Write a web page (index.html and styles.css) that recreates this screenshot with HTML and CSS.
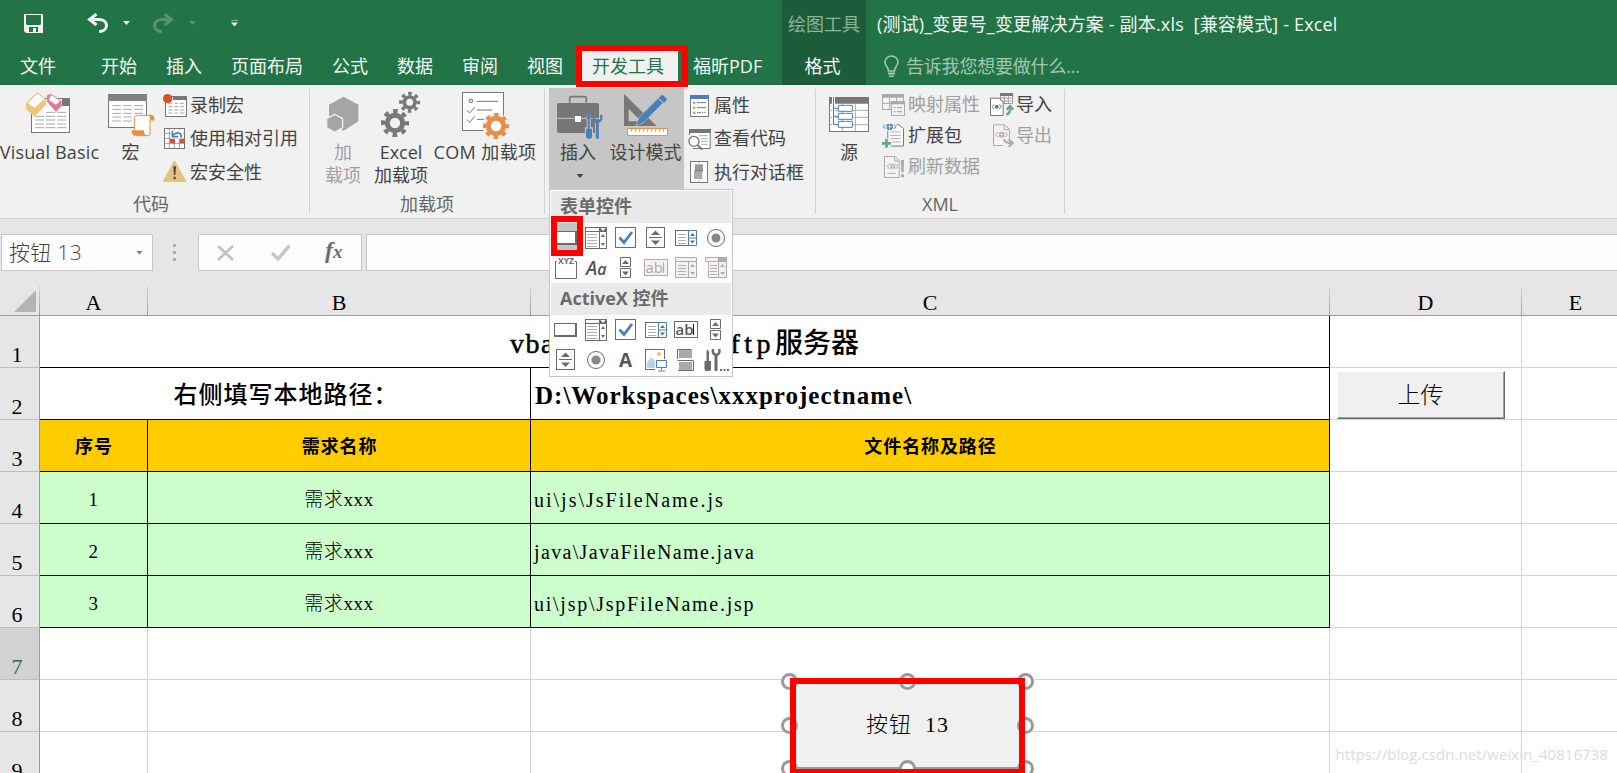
FILE: index.html
```html
<!DOCTYPE html>
<html lang="zh-CN">
  <head>
    <meta charset="UTF-8" />
    <meta name="viewport" content="width=device-width, initial-scale=1.0" />
    <title>(测试)_变更号_变更解决方案 - 副本.xls [兼容模式] - Excel</title>
    <link rel="stylesheet" href="styles.css">
  </head>
  <body>
    <!-- shared icons -->
    <svg class="defs" width="0" height="0">
      <symbol id="i-combo" viewBox="0 0 30 30">
        <rect x="4.5" y="4.5" width="21" height="21" class="paper" />
        <path d="M4.5 8.5h14M18.5 4.5v21" class="line" />
        <path d="M18 4h8v5h-8z" class="solid" />
        <path d="M19.5 5l2.500 3 2.500-3z" fill="#fff" />
        <path d="M6 11.500h10M6 14.500h10M6 17.500h10M6 20.500h10M6 23.500h10" class="thin" />
        <path d="M20 14l2-3 2 3zM20 20l2 3 2-3z" class="solid" />
      </symbol>
      <symbol id="i-check" viewBox="0 0 30 30">
        <rect x="4.500" y="4.500" width="20" height="20" class="paper" />
        <path d="M8.500 14.500l4.500 5 8-10.500" fill="none" stroke="#4a80b8" stroke-width="2.800" />
      </symbol>
      <symbol id="i-spin" viewBox="0 0 30 30">
        <rect x="5.500" y="4.500" width="18" height="20" class="paper" />
        <path d="M8 14.500h13" class="line" />
        <path d="M10 12l4.500-4.500 4.500 4.500zM10 17.500l4.500 4.500 4.500-4.500z" class="solid" />
      </symbol>
      <symbol id="i-list" viewBox="0 0 30 30">
        <rect x="4.500" y="7.500" width="13" height="15" class="paper" />
        <path d="M7 11.500h8M7 14.500h8M7 17.500h8M7 20.500h8" class="thin" />
        <path d="M17.500 7.500h8v15h-8zM17.500 15h8" fill="#fff" stroke="#4a80b8" />
        <path d="M19 13l2.500-3 2.500 3zM19 17.500l2.500 3 2.500-3z" class="solid" />
      </symbol>
      <symbol id="i-radio" viewBox="0 0 30 30">
        <circle cx="15" cy="15" r="8.500" class="paper" />
        <circle cx="15" cy="15" r="4.500" fill="#888" />
      </symbol>
      <symbol id="i-scroll" viewBox="0 0 30 30">
        <path d="M9.500 4.500h10v9h-10zM9.500 15.500h10v9h-10z" class="paper" />
        <path d="M11 11l3.500-4 3.500 4zM11 18.500l3.500 4 3.500-4z" class="solid" />
      </symbol>
      <symbol id="i-button" viewBox="0 0 30 30">
        <path d="M3 8h23v14H3z" class="solid" />
        <path d="M4 9h20v11H4z" fill="#fff" />
      </symbol>
    </svg>

    <header class="titlebar">
      <div class="top-left">
        <div class="quick">
          <svg class="q-save" width="19" height="19" viewBox="0 0 19 19">
            <path d="M0 0h19v19H2l-2-2z" fill="#f0f0f0" />
            <path d="M2 1h15v9l-1 1H3l-1-1zM5 13h9v5h-2v-4H9v4H5z" fill="#227447" />
          </svg>
          <svg class="q-undo" width="22" height="20" viewBox="0 0 22 20">
            <path d="M9.500 1L2.500 6.500l7 5.500M3 6.500h9c10 0 10 12 0 12" fill="none" stroke="#f0f0f0" stroke-width="3" />
          </svg>
          <i class="caret q-c1"></i>
          <svg class="q-redo" width="22" height="20" viewBox="0 0 22 20">
            <path d="M12.500 1l7 5.500-7 5.500M19 6.500h-9c-10 0-10 12 0 12" fill="none" stroke="#56946f" stroke-width="3" />
          </svg>
          <i class="caret q-c2"></i>
          <i class="caret q-c3"></i>
        </div>
        <nav class="tabs">
          <a class="file">文件</a>
          <a>开始</a>
          <a>插入</a>
          <a>页面布局</a>
          <a>公式</a>
          <a>数据</a>
          <a>审阅</a>
          <a>视图</a>
          <a class="active">开发工具</a>
          <a class="pdf">福昕PDF</a>
        </nav>
      </div>
      <div class="context">
        <span class="context-name">绘图工具</span>
        <span class="context-tab">格式</span>
      </div>
      <div class="top-right">
        <span class="doc-title">(测试)_变更号_变更解决方案 - 副本.xls&nbsp; [兼容模式] - Excel</span>
        <span class="tell">
          <svg width="15" height="23" viewBox="0 0 15 23">
            <path d="M4.500 16c0-4-3.500-5-3.500-9a6.500 6 0 0 1 13 0c0 4-3.500 5-3.500 9z" fill="none" stroke="#a3c7b1" stroke-width="1.600" />
            <path d="M4 17.500h7v2H4zM5 20.500h5v1.500H5z" fill="#a3c7b1" />
          </svg>
          <span>告诉我您想要做什么...</span>
        </span>
      </div>
      <div class="mark mark-tab"></div>
    </header>

    <section class="ribbon">
      <div class="group g-code">
        <div class="items">
          <div class="big b-vb">
            <svg width="50" height="53" viewBox="72 15 150 159">
              <rect x="94.500" y="43.500" width="114" height="102" fill="#fff" stroke="#777" stroke-width="3" />
              <path d="M186 42h24v24h-24z" fill="#777" />
              <path d="M105 97h28m5 0h28m6 0h27M105 108h28m5 0h28m6 0h27M105 120h28m5 0h28m6 0h27M105 131h28m5 0h28m6 0h27M138 85h28m6 0h27" stroke="#aaa" stroke-width="3" />
              <path d="M112 24l26 21v18l-35 35-25-23V57z" fill="#edc67c" />
              <path d="M112 29l21 15-29 27-21-13z" fill="#fff" />
              <path d="M141 34l12-5 32 22v15l-17 18-27-31z" fill="#e3799a" />
              <path d="M154 33l26 18-12 11-22-15z" fill="#fff" />
            </svg>
            <span>Visual Basic</span>
          </div>
          <div class="big b-macro">
            <svg width="51" height="53" viewBox="315 15 153 159">
              <rect x="325.500" y="31.500" width="114" height="99" fill="#fff" stroke="#777" stroke-width="3" />
              <path d="M324 30h117v21H324z" fill="#808080" />
              <path d="M337 65h26m7 0h25m8 0h26M337 76h26m7 0h25m8 0h26M337 88h26m7 0h25m8 0h26M337 99h26m7 0h25M337 111h26m7 0h25" stroke="#aaa" stroke-width="3" />
              <path d="M404 140v-38q0-8 8-8h42q8 0 8 14h-12v42q0 5-8 5h-30z" fill="#fff" stroke="#e68f45" stroke-width="3" />
              <path d="M448 94h8q6 0 6 15h-12zM396 139h35q0 12 9 16h-36q-12-4-8-16z" fill="#e68f45" />
            </svg>
            <span>宏</span>
          </div>
          <div class="smalls">
            <div class="small">
              <svg width="24" height="24" viewBox="489 27 72 72">
                <rect x="496.500" y="34.500" width="63" height="60" fill="#fff" stroke="#777" stroke-width="3" />
                <path d="M519 33h42v12h-42z" fill="#777" />
                <path d="M505 55h12m6 0h12m5 0h12M505 65h12m6 0h12m5 0h12M505 75h12m6 0h12m5 0h12M505 84h12m6 0h12m5 0h12" stroke="#aaa" stroke-width="3" />
                <circle cx="503" cy="41" r="14" fill="#d3542d" />
              </svg>
              <span>录制宏</span>
            </div>
            <div class="small">
              <svg width="24" height="24" viewBox="489 126 72 72">
                <rect x="493.500" y="130.500" width="60" height="60" fill="#fff" stroke="#777" stroke-width="3" />
                <path d="M508 131v59M523 131v59M538 131v59M494 145h60M494 160h60M494 175h60" stroke="#777" stroke-width="2" />
                <path d="M510 162h15v13h-15zM539 162h15v13h-15z" fill="#d3542d" />
                <path d="M512 136h36v25h-36z" fill="#fff" />
                <path d="M544 158q0-24-26-8M517 137v18h18" fill="none" stroke="#4a80b8" stroke-width="5" />
              </svg>
              <span>使用相对引用</span>
            </div>
            <div class="small">
              <svg width="24" height="24" viewBox="489 225 72 72">
                <path d="M523 228q3 0 5 4l30 55q1 4-3 4h-63q-4 0-3-4l30-55q1-4 4-4z" fill="#e9c17f" />
                <path d="M520 244h8l-2 26h-4zM521 275h6v8h-6z" fill="#444" />
              </svg>
              <span>宏安全性</span>
            </div>
          </div>
        </div>
        <div class="label">代码</div>
      </div>

      <div class="group g-addin">
        <div class="items">
          <div class="big b-add off">
            <svg width="50" height="53" viewBox="39 15 150 159">
              <path d="M116 38l44 24v50l-44 28-44-28V62z" fill="#a6a4a6" />
              <path d="M89 91l24 13v27l-24 14-24-14v-27z" fill="#a6a4a6" stroke="#f1f1f1" stroke-width="4" />
            </svg>
            <span>加</span><span>载项</span>
          </div>
          <div class="big b-excel">
            <svg width="50" height="53" viewBox="213 15 150 159" fill="none" stroke="#787878">
              <circle cx="270" cy="117" r="23" stroke-width="15" />
              <circle cx="270" cy="117" r="36" stroke-width="12" stroke-dasharray="14.140" stroke-dashoffset="7" />
              <circle cx="314" cy="55" r="16" stroke-width="11" />
              <circle cx="314" cy="55" r="26" stroke-width="11" stroke-dasharray="10.210" stroke-dashoffset="5" />
            </svg>
            <span>Excel</span><span>加载项</span>
          </div>
          <div class="big b-com">
            <svg width="50" height="53" viewBox="465 15 150 159" fill="none">
              <rect x="472.500" y="25.500" width="123" height="114" fill="#fff" stroke="#777" stroke-width="3" />
              <path d="M493 46h9v9h-9zM516 52h63M516 78h45M516 106h22M486 79l8 8 15-18M486 107l8 8 15-18" stroke="#777" stroke-width="3" />
              <circle cx="573" cy="126" r="34" fill="#f1f1f1" stroke="#f1f1f1" stroke-width="12" />
              <circle cx="573" cy="126" r="23" stroke="#e68f45" stroke-width="15" fill="#fff" />
              <circle cx="573" cy="126" r="33" stroke="#e68f45" stroke-width="12" stroke-dasharray="12.960" stroke-dashoffset="6.500" />
            </svg>
            <span>COM 加载项</span>
          </div>
        </div>
        <div class="label">加载项</div>
      </div>

      <div class="group g-ctl">
        <div class="items">
          <div class="pressed">
            <div class="big b-insert">
              <svg width="50" height="53" viewBox="24 15 150 159">
                <path d="M74 56V44q0-6 6-6h38q6 0 6 6v12" fill="none" stroke="#777" stroke-width="5" />
                <rect x="36" y="57" width="126" height="90" rx="6" fill="#777" />
                <path d="M36 103h126" stroke="#c6c6c6" stroke-width="3" />
                <path d="M90 96h18v18H90z" fill="#fff" />
                <path d="M131 92v45" stroke="#c6c6c6" stroke-width="12" />
                <path d="M120 130h24v40h-24zM150 112h14v54h-14z" fill="#c6c6c6" />
                <path d="M131 92v45" stroke="#4a80b8" stroke-width="6" />
                <path d="M123 134h18v24q0 6-6 6h-6q-6 0-6-6zM126 92h11v12h-11z" fill="#4a80b8" />
                <path d="M157 112v52" stroke="#4a80b8" stroke-width="9" />
                <path d="M147 92q-4 20 10 22 16-2 11-22" fill="none" stroke="#4a80b8" stroke-width="7" />
              </svg>
              <span>插入</span>
              <i class="caret dark"></i>
            </div>
            <div class="big b-design">
              <svg width="51" height="53" viewBox="225 15 153 159">
                <path d="M237 30l98 96h-98zM251 74v38h37z" fill="#777" fill-rule="evenodd" />
                <path d="M282 100l57-57 15 14-57 58-24 11z" fill="#4a80b8" stroke="#c6c6c6" stroke-width="2" />
                <path d="M341 42l8-8q4-2 7 1l8 8q2 3-1 7l-6 7z" fill="#4a80b8" />
                <path d="M247.500 133.500h120v21h-120z" fill="#fff" stroke="#e68f45" stroke-width="3" />
                <path d="M260 135v8M272 135v8M284 135v8M296 135v8M308 135v8M320 135v8M332 135v8M344 135v8M356 135v8" stroke="#e68f45" stroke-width="3" />
              </svg>
              <span>设计模式</span>
            </div>
          </div>
          <div class="smalls">
            <div class="small">
              <svg width="24" height="24" viewBox="429 27 72 72">
                <rect x="436.500" y="31.500" width="54" height="63" fill="#fff" stroke="#777" stroke-width="3" />
                <path d="M435 30h57v12h-57z" fill="#4a80b8" />
                <path d="M456 53h27M456 68h27M456 83h12m3 0h4m3 0h4" stroke="#777" stroke-width="3" />
                <path d="M445 51h5v5h-5zM445 66h5v5h-5zM445 81h5v5h-5z" fill="none" stroke="#777" stroke-width="2" />
              </svg>
              <span>属性</span>
            </div>
            <div class="small">
              <svg width="24" height="24" viewBox="427 126 72 72">
                <rect x="431.500" y="133.500" width="62" height="57" fill="#fff" stroke="#777" stroke-width="3" />
                <path d="M430 132h65v12h-65z" fill="#777" />
                <path d="M461 152h25M466 161h20M466 169h20M466 178h20" stroke="#aaa" stroke-width="3" />
                <path d="M427 150h14v45h-14z" fill="#f1f1f1" />
                <circle cx="445" cy="169" r="15" fill="#fff" stroke="#777" stroke-width="4" />
                <path d="M456 180l13 14" stroke="#777" stroke-width="6" />
              </svg>
              <span>查看代码</span>
            </div>
            <div class="small">
              <svg width="24" height="24" viewBox="429 225 72 72">
                <rect x="436.500" y="229.500" width="51" height="63" fill="#fff" stroke="#777" stroke-width="3" />
                <path d="M450 238h24v18h-24z" fill="#999" />
                <path d="M447 256h25v26h-25z" fill="#aaa" />
                <path d="M450 257h24" stroke="#777" stroke-width="3" />
                <path d="M461 232h3v3h-3zM461 286h3v3h-3z" fill="#777" />
              </svg>
              <span>执行对话框</span>
            </div>
          </div>
        </div>
      </div>

      <div class="group g-xml">
        <div class="items">
          <div class="big b-source">
            <svg width="50" height="53" viewBox="42 15 150 159">
              <rect x="58.500" y="40.500" width="117" height="102" fill="#fff" stroke="#777" stroke-width="3" />
              <path d="M57 39h120v20H57z" fill="#777" />
              <path d="M58 79h118M58 100h118M58 122h118M97 60v82M136 60v82" stroke="#aaa" stroke-width="3" />
              <path d="M66 36h9v88h-9z" fill="#fff" />
              <path d="M70.500 39v83h14M70 73h14M70 97h14" fill="none" stroke="#4a80b8" stroke-width="3" />
              <path d="M85 64h42v18H85zM85 88h42v18H85zM85 112h42v18H85z" fill="#fff" stroke="#4a80b8" stroke-width="3" />
            </svg>
            <span>源</span>
          </div>
          <div class="smalls tight c2">
            <div class="small off">
              <svg width="24" height="24" viewBox="216 25 72 72">
                <rect x="217.500" y="29.500" width="63" height="45" fill="#f6f2f6" stroke="#aaa" stroke-width="3" />
                <path d="M216 28h66v11h-66z" fill="#aaa" />
                <path d="M239 39v36M260 39v12M217 56h26" stroke="#aaa" stroke-width="3" />
                <path d="M244.500 50.500h39v42h-39z" fill="#f6f2f6" stroke="#aaa" stroke-width="3" />
                <path d="M243 49h42v10h-42zM251 67h6v4h-6zM261 67h15v4h-15zM251 79h6v4h-6zM261 79h15v4h-15z" fill="#aaa" />
              </svg>
              <span>映射属性</span>
            </div>
            <div class="small">
              <svg width="24" height="24" viewBox="213 116 72 72">
                <path d="M230.500 130v52h47v-52l-14-12h-14" fill="#fff" stroke="#777" stroke-width="3" />
                <path d="M237 140h32M237 150h32M237 160h32M243 170h26" stroke="#aaa" stroke-width="3" />
                <path d="M213 116h44v20h-44zM213 158h27v30h-27z" fill="#f1f1f1" />
                <circle cx="236" cy="124" r="10" fill="#4a80b8" />
                <path d="M227 124h18M236 115v18" stroke="#fff" stroke-width="2" />
                <path d="M222 118l-5 6 5 6M250 118l5 6-5 6" fill="none" stroke="#777" stroke-width="3" />
                <path d="M213 174h27M226.500 160v27" stroke="#66a58e" stroke-width="8" />
              </svg>
              <span>扩展包</span>
            </div>
            <div class="small off">
              <svg width="24" height="24" viewBox="216 207 72 72">
                <path d="M223.500 211.500h32l12 12v51h-44z" fill="#f6f2f6" stroke="#aaa" stroke-width="3" />
                <path d="M254 212v13h13M240 232l-9 9 9 9M256 232l8 9-8 9M232 262h25" fill="none" stroke="#aaa" stroke-width="3" />
                <circle cx="248" cy="241" r="8" fill="#aaa" />
                <path d="M240 241h16M248 233v16" stroke="#f6f2f6" stroke-width="2" />
                <path d="M270 218h16v60h-16z" fill="#f1f1f1" />
                <path d="M273 222h9l-1 37h-7zM273 265h9v9h-9z" fill="#aaa" />
              </svg>
              <span>刷新数据</span>
            </div>
          </div>
          <div class="smalls tight">
            <div class="small">
              <svg width="24" height="24" viewBox="540 25 72 72">
                <path d="M571.500 26.500h36v30h-36zM571 40h37M571 49h37M583 34v24M595 34v24" fill="#fff" stroke="#777" stroke-width="2" />
                <path d="M570 25h39v9h-39z" fill="#777" />
                <path d="M541.500 40.500h26l12 12v40h-38z" fill="#fff" stroke="#777" stroke-width="3" />
                <circle cx="560" cy="66" r="6" fill="#4a80b8" />
                <path d="M552 59l-6 7 6 7M568 59l6 7-6 7" fill="none" stroke="#777" stroke-width="3" />
                <path d="M584 58h28v39h-28z" fill="#f1f1f1" />
                <path d="M589 90q14-6 11-22M590 75l10-11 10 11" fill="none" stroke="#66a58e" stroke-width="7" />
              </svg>
              <span>导入</span>
            </div>
            <div class="small off">
              <svg width="24" height="24" viewBox="540 116 72 72">
                <path d="M550.500 118.500h33l15 14v48h-48z" fill="#f6f2f6" stroke="#aaa" stroke-width="3" />
                <path d="M582 119v14h16M564 140l-7 8 7 8M586 140l7 8-7 8" fill="none" stroke="#aaa" stroke-width="3" />
                <circle cx="575" cy="148" r="9" fill="#aaa" />
                <path d="M566 148h18M575 139v18" stroke="#f6f2f6" stroke-width="2" />
                <path d="M579 160h33v27h-33z" fill="#f1f1f1" />
                <path d="M582 162q3 12 22 11M596 162l12 11-12 11" fill="none" stroke="#aaa" stroke-width="6" />
              </svg>
              <span>导出</span>
            </div>
          </div>
        </div>
        <div class="label">XML</div>
      </div>

      <!-- insert control menu -->
      <div class="menu">
        <div class="menu-head">表单控件</div>
        <div class="icons">
          <span class="hot"><svg><use href="#i-button" /></svg></span>
          <svg><use href="#i-combo" /></svg>
          <svg><use href="#i-check" /></svg>
          <svg><use href="#i-spin" /></svg>
          <svg><use href="#i-list" /></svg>
          <svg><use href="#i-radio" /></svg>
          <svg viewBox="0 0 30 30">
            <path d="M6 8.500H4.500v17h21v-17H24" class="line" />
            <text x="7" y="11" class="xyz">XYZ</text>
          </svg>
          <svg viewBox="0 0 30 30"><text x="5" y="22" class="aa">A<tspan font-size="16">a</tspan></text></svg>
          <svg><use href="#i-scroll" /></svg>
          <svg class="dim" viewBox="0 0 30 30">
            <rect x="3.500" y="6.500" width="23" height="16" class="paper" />
            <text x="4.500" y="20" class="abl">ab</text>
            <path d="M22.500 9v11" class="line" />
          </svg>
          <svg class="dim" viewBox="0 0 30 30">
            <path d="M4.500 4.500h21v4h-21zM4.500 8.500h13v16h-13zM17.500 8.500h8v16h-8z" class="paper" />
            <path d="M7 12.500h8M7 15.500h8M7 18.500h8M7 21.500h8" class="thin" />
            <path d="M19 14l2.500-3 2.500 3zM19 19l2.500 3 2.500-3z" class="solid" />
          </svg>
          <svg class="dim" viewBox="0 0 30 30">
            <path d="M4.500 4.500h21v4h-21zM7.500 8.500h10v16h-10zM17.500 8.500h8v16h-8z" class="paper" />
            <path d="M9 12.500h7M9 15.500h7M9 18.500h7M9 21.500h7" class="thin" />
            <path d="M17 4h9v4h-9zM19 14l2.500-3 2.500 3zM19 19l2.500 3 2.500-3z" class="solid" />
          </svg>
        </div>
        <div class="menu-head">ActiveX 控件</div>
        <div class="icons">
          <svg><use href="#i-button" /></svg>
          <svg><use href="#i-combo" /></svg>
          <svg><use href="#i-check" /></svg>
          <svg><use href="#i-list" /></svg>
          <svg viewBox="0 0 30 30">
            <rect x="3.500" y="6.500" width="23" height="16" class="paper" />
            <text x="4.500" y="20" class="abl dark">ab</text>
            <path d="M22.500 9v11" stroke="#222" />
          </svg>
          <svg><use href="#i-scroll" /></svg>
          <svg><use href="#i-spin" /></svg>
          <svg><use href="#i-radio" /></svg>
          <svg viewBox="0 0 30 30"><text x="8" y="22" class="big-a">A</text></svg>
          <svg viewBox="0 0 30 30">
            <rect x="4.500" y="4.500" width="19" height="20" class="paper" />
            <circle cx="18" cy="9" r="2" fill="#e9c17f" />
            <path d="M6 23v-6l4.500-4.500 4.500 4.500v6z" fill="#bccfe4" />
            <path d="M14 14h13v12h-13z" fill="#fff" />
            <path d="M15.500 15.500h10v7h-10zM20.500 22.500v3M17 26h7" fill="#fff" stroke="#4a80b8" />
          </svg>
          <svg viewBox="0 0 30 30">
            <path d="M8 5h13v8H8zM8 17h13v8H8z" fill="#aaa" />
            <path d="M6.500 14V4.500h14M22 15.500H6.500M22.500 15.500v10H7" class="line" />
          </svg>
          <svg viewBox="0 0 30 30">
            <path d="M6.500 4l1.500 3v9h2v8q0 2-2 2H5.500q-2 0-2-2v-8h2V7zM13.500 9v17h3V9z" class="solid" />
            <path d="M12 4q-1 5 3 6 5-1 3-6" fill="none" stroke="#6b6b6b" stroke-width="2.500" />
            <path d="M19 24h2v2h-2zM22.500 24h2v2h-2zM26 24h2v2h-2z" class="solid" />
          </svg>
        </div>
        <div class="mark mark-control"></div>
      </div>
    </section>

    <section class="formula">
      <div class="name-box"><span>按钮 13</span> <i class="caret gray"></i></div>
      <div class="dots"><i></i><i></i><i></i></div>
      <div class="fx-box">
        <svg width="18" height="16" viewBox="0 0 18 16"><path d="M1 1l15 14M16 1L1 15" stroke="#c0c0c0" stroke-width="2.500" /></svg>
        <svg width="20" height="18" viewBox="0 0 20 18"><path d="M1 9l6 6L18.500 1.500" fill="none" stroke="#c8c8c8" stroke-width="3.500" /></svg>
        <span class="fx">f<small>x</small></span>
      </div>
      <div class="input-box"></div>
    </section>

    <main class="sheet">
      <table>
        <colgroup>
          <col class="w-row"><col class="w-a"><col class="w-b"><col class="w-c"><col class="w-d"><col class="w-e">
        </colgroup>
        <tr class="cols">
          <th class="corner"><svg width="22" height="22" viewBox="0 0 22 22"><path d="M22 0v22H0z" fill="#b4b4b4" /></svg></th>
          <th>A</th><th>B</th><th>C</th><th>D</th><th>E</th>
        </tr>
        <tr>
          <th>1</th>
          <td colspan="3" class="k title"><div><span class="t1">vba</span><span><span class="t2">ftp</span>服务器</span></div></td>
          <td></td><td></td>
        </tr>
        <tr>
          <th>2</th>
          <td colspan="2" class="k prompt">右侧填写本地路径：</td>
          <td class="k path">D:\Workspaces\xxxprojectname\</td>
          <td></td><td></td>
        </tr>
        <tr class="head">
          <th>3</th>
          <td class="k">序号</td><td class="k">需求名称</td><td class="k">文件名称及路径</td>
          <td></td><td></td>
        </tr>
        <tr class="data">
          <th>4</th>
          <td class="k">1</td><td class="k">需求xxx</td><td class="k file-name f1">ui\js\JsFileName.js</td>
          <td></td><td></td>
        </tr>
        <tr class="data">
          <th>5</th>
          <td class="k">2</td><td class="k">需求xxx</td><td class="k file-name f2">java\JavaFileName.java</td>
          <td></td><td></td>
        </tr>
        <tr class="data">
          <th>6</th>
          <td class="k">3</td><td class="k">需求xxx</td><td class="k file-name f3">ui\jsp\JspFileName.jsp</td>
          <td></td><td></td>
        </tr>
        <tr><th class="current">7</th><td></td><td></td><td></td><td></td><td></td></tr>
        <tr><th>8</th><td></td><td></td><td></td><td></td><td></td></tr>
        <tr><th>9</th><td></td><td></td><td></td><td></td><td></td></tr>
      </table>

      <button class="upload">上传</button>

      <div class="shape">
        <span>按钮&nbsp; 13</span>
        <i class="h tl"></i><i class="h tc"></i><i class="h tr"></i>
        <i class="h ml"></i><i class="h mr"></i>
        <i class="h bl"></i><i class="h bc"></i><i class="h br"></i>
        <div class="mark mark-shape"></div>
      </div>

      <div class="watermark">https://blog.csdn.net/weixin_40816738</div>
    </main>
  </body>
</html>
```

FILE: styles.css
```css
* {
  box-sizing: border-box;
}
body {
  margin: 0;
  width: 1617px;
  height: 773px;
  overflow: hidden;
  display: flex;
  flex-direction: column;
  background: #e6e6e6;
  font-family: "Open Sans", "Noto Sans CJK SC", sans-serif;
  font-size: 18px;
  color: #444;
}
.defs {
  position: absolute;
}
svg {
  flex: none;
}

/* red outlines */
.mark {
  position: absolute;
  border: 6px solid #ff0000;
}
.mark-tab {
  left: 576px;
  top: 45px;
  width: 112px;
  height: 42px;
  z-index: 2;
}
.mark-control {
  left: 1px;
  top: 26px;
  width: 32px;
  height: 40px;
}
.mark-shape {
  left: 0;
  top: -3px;
  width: 235px;
  height: 97px;
}

/* carets */
.caret {
  width: 7px;
  height: 4px;
  background: #f0f0f0;
  clip-path: polygon(0 0, 100% 0, 50% 100%);
}
.caret.dark {
  background: #444;
  margin: 11px 0 0 4px;
}
.caret.gray {
  background: #777;
}

/* title bar */
.titlebar {
  position: relative;
  display: flex;
  height: 85px;
  flex: none;
  background: #227447;
  color: #f4f8f5;
  white-space: nowrap;
}
.top-left {
  width: 782px;
}
.quick {
  display: flex;
  align-items: center;
  height: 51px;
  padding: 0 0 5px 24px;
}
.q-undo {
  margin-left: 44px;
}
.q-c1 {
  margin-left: 14px;
}
.q-redo {
  margin-left: 22px;
}
.q-c2 {
  margin-left: 15px;
  background: #56946f;
}
.q-c3 {
  margin-left: 35px;
  height: 7px;
  clip-path: polygon(0 0, 100% 0, 100% 1px, 0 1px, 0 3px, 100% 3px, 50% 100%, 0 3px);
}
.tabs {
  display: flex;
  height: 34px;
  line-height: 30px;
  padding-left: 20px;
}
.tabs a {
  margin-right: 29px;
}
.tabs .file {
  margin-right: 45px;
}
.tabs .active {
  width: 96px;
  margin: 0 15px 0 -10px;
  padding-right: 4px;
  background: #f1f1f1;
  color: #227447;
  text-align: center;
}
.tabs .pdf {
  margin: 0;
}
.context {
  display: flex;
  flex-direction: column;
  width: 84px;
  text-align: center;
  background: #1d5c3b;
  line-height: 30px;
}
.context-name {
  height: 51px;
  line-height: 48px;
  color: #8ab499;
}
.context-tab {
  padding-right: 3px;
}
.top-right {
  padding-left: 11px;
}
.doc-title {
  display: block;
  height: 51px;
  line-height: 48px;
  letter-spacing: 0.17px;
}
.tell {
  display: flex;
  align-items: center;
  gap: 7px;
  height: 31px;
  padding-left: 7px;
  color: #a3c7b1;
}
.tell span {
  margin-top: -4px;
  letter-spacing: -0.2px;
}

/* ribbon */
.ribbon {
  position: relative;
  display: flex;
  flex: none;
  height: 134px;
  background: #f1f1f1;
  border-bottom: 1px solid #d2d2d2;
  white-space: nowrap;
}
.group {
  display: flex;
  flex-direction: column;
  margin-top: 4px;
  height: 125px;
  border-right: 1px solid #d2d2d2;
}
.g-code {
  width: 310px;
}
.g-addin {
  width: 235px;
}
.g-ctl {
  width: 271px;
}
.g-xml {
  width: 249px;
}
.items {
  display: flex;
  flex: none;
  height: 104px;
}
.label {
  text-align: center;
  line-height: 22px;
  color: #666;
}
.g-code .label {
  padding-right: 7px;
}
.big {
  display: flex;
  flex-direction: column;
  align-items: center;
  line-height: 22px;
}
.big svg {
  height: 53px;
  margin-bottom: -1px;
}
.big span + span {
  margin-top: 1px;
}
.b-vb {
  width: 98px;
}
.b-vb span {
  padding-left: 1px;
  letter-spacing: 0.15px;
}
.b-macro {
  width: 65px;
}
.b-add {
  width: 66px;
}
.b-excel {
  width: 50px;
}
.b-com {
  width: 118px;
}
.b-com span {
  letter-spacing: 0.4px;
}
.b-insert {
  width: 58px;
}
.b-design {
  width: 77px;
}
.b-source {
  width: 66px;
}
.off {
  color: #a0a0a0;
}
.pressed {
  display: flex;
  height: 102px;
  margin: -1px 4px 0 4px;
  padding-top: 1px;
  background: #c6c6c6;
}
.small {
  display: flex;
  align-items: center;
  gap: 3px;
  height: 33.3px;
}
.small span {
  margin-top: -3px;
}
.g-ctl .small {
  gap: 2px;
}
.tight .small {
  height: 31px;
}
.tight .small span {
  margin: -4px 0 0 -1px;
}
.c2 {
  width: 108px;
}

/* menu */
.menu {
  position: absolute;
  left: 549px;
  top: 104px;
  width: 184px;
  height: 188px;
  padding: 1px;
  background: #fff;
  border: 1px solid #c6c6c6;
  z-index: 3;
}
.menu-head {
  height: 32px;
  line-height: 31px;
  padding-left: 9px;
  background: #eaeaea;
  color: #6b6b6b;
  font-weight: bold;
}
.icons {
  display: grid;
  grid-template-columns: repeat(6, 30px);
  grid-auto-rows: 30px;
  color: #6b6b6b;
}
.icons svg {
  display: block;
  width: 30px;
  height: 30px;
}
.hot {
  background: #c6c6c6;
}
.dim {
  color: #b0a9b0;
}
.paper {
  fill: #fff;
  stroke: currentColor;
}
.dim .paper {
  fill: #f6f0f6;
}
.line {
  fill: none;
  stroke: currentColor;
}
.thin {
  stroke: #b0b0b0;
}
.solid {
  fill: currentColor;
}
.abl {
  font-size: 15px;
  fill: currentColor;
}
.abl.dark {
  font-weight: 600;
  fill: #555;
}
.xyz {
  font-size: 8.5px;
  font-weight: bold;
  fill: currentColor;
}
.aa {
  font-size: 19px;
  font-style: italic;
  font-weight: 600;
  fill: #555;
}
.big-a {
  font-size: 19px;
  font-weight: bold;
  fill: #555;
}

/* formula bar */
.formula {
  display: flex;
  flex: none;
  height: 67px;
  padding: 15px 0 0 1px;
}
.formula > div {
  height: 37px;
}
.name-box,
.fx-box,
.input-box {
  background: #fdfdfd;
  border: 1px solid #c6c6c6;
}
.name-box {
  display: flex;
  align-items: center;
  justify-content: space-between;
  width: 152px;
  padding: 0 9px 0 7px;
  font-size: 21px;
}
.name-box span {
  margin-top: -3px;
  font-weight: 300;
  letter-spacing: 0.3px;
}
.dots {
  display: flex;
  flex-direction: column;
  justify-content: center;
  gap: 4px;
  width: 45px;
  padding-left: 20px;
}
.dots i {
  width: 3px;
  height: 3px;
  background: #b0b0b0;
}
.fx-box {
  display: flex;
  align-items: center;
  width: 164px;
  padding-left: 18px;
}
.fx-box svg + svg {
  margin-left: 36px;
}
.fx {
  margin: -4px 0 0 34px;
  font: italic bold 24px "Liberation Serif", serif;
  color: #6b6b6b;
}
.fx small {
  font-size: 19px;
}
.input-box {
  flex: 1;
  margin-left: 4px;
  border-right: 0;
}

/* sheet */
.sheet {
  position: relative;
  flex: 1;
  overflow: hidden;
  color: #000;
  font-family: "Liberation Serif", "Noto Sans CJK SC", serif;
}
table {
  table-layout: fixed;
  width: 1630px;
  border-spacing: 0;
  background: #fff;
}
.w-row {
  width: 40px;
}
.w-a {
  width: 108px;
}
.w-b {
  width: 383px;
}
.w-c {
  width: 799px;
}
.w-d {
  width: 192px;
}
.w-e {
  width: 108px;
}
td,
th {
  height: 52px;
  padding: 0;
  border: solid #d4d4d4;
  border-width: 0 1px 1px 0;
  text-align: center;
  white-space: nowrap;
  line-height: 24px;
}
th {
  padding: 0 5px 1px 0;
  background: #e6e6e6;
  border-right-color: #9b9b9b;
  border-bottom-color: #bdbdbd;
  font-size: 22px;
  font-weight: normal;
  line-height: 22px;
  vertical-align: bottom;
}
.cols th {
  height: 30px;
  padding: 0 0 1px;
  border-bottom-color: #9b9b9b;
  border-image: linear-gradient(#d8d8d8, #9b9b9b) 1;
  border-width: 0 1px 1px 0;
}
.cols .corner {
  padding: 0 3px 3px 0;
  text-align: right;
}
.corner svg {
  display: block;
  margin-left: auto;
}
th.current {
  background: #d2d2d2;
  color: #217346;
}
td.k {
  border-color: #000;
}
.title div {
  display: flex;
  justify-content: space-between;
  width: 349px;
  margin: 4px auto 0;
  font-size: 28px;
  font-weight: 500;
}
.t1 {
  letter-spacing: 1.5px;
}
.t2 {
  letter-spacing: 4.5px;
}
.t1,
.t2 {
  -webkit-text-stroke: 0.5px #000;
}
.prompt {
  padding: 2px 0 0 2px;
  font-size: 24px;
  letter-spacing: 1px;
  font-weight: 500;
}
td.path {
  padding: 4px 0 0 4px;
  text-align: left;
  font-size: 25px;
  font-weight: bold;
  letter-spacing: 1px;
}
.head .k {
  padding: 2px 0 0 1px;
  background: #ffcc00;
  font-size: 18px;
  font-weight: bold;
  letter-spacing: 0.9px;
}
.data .k {
  background: #ccffcc;
  font-size: 19px;
  font-weight: 300;
  letter-spacing: 0.6px;
  padding-top: 4px;
}
.data .file-name {
  padding-left: 3px;
  text-align: left;
  font-size: 20px;
}
.data .f1 {
  letter-spacing: 2px;
}
.data .f2 {
  letter-spacing: 1.35px;
}
.data .f3 {
  letter-spacing: 1.75px;
}
.upload {
  position: absolute;
  left: 1337px;
  top: 85px;
  width: 168px;
  height: 48px;
  padding: 0 1px 4px 0;
  background: #f0f0f0;
  border: 1px solid #fff;
  border-right-color: #696969;
  border-bottom-color: #696969;
  box-shadow: inset -1px -1px #a0a0a0;
  font: 300 23px "Noto Sans CJK SC", sans-serif;
  color: #000;
}
.shape {
  position: absolute;
  left: 790px;
  top: 395px;
  width: 235px;
  height: 88px;
  background: #f0f0f0;
  border-bottom: 2px solid #999;
  text-align: center;
  line-height: 88px;
  font-size: 22px;
  font-weight: 300;
  letter-spacing: 1px;
}
.h {
  position: absolute;
  width: 17px;
  height: 17px;
  border: 3px solid #999;
  border-radius: 50%;
  background: #fff;
}
.tl,
.ml,
.bl {
  left: -9px;
}
.tc,
.bc {
  left: 109px;
}
.tr,
.mr,
.br {
  left: 227px;
}
.tl,
.tc,
.tr {
  top: -8px;
}
.ml,
.mr {
  top: 36px;
}
.bl,
.bc,
.br {
  top: 79px;
}
.watermark {
  position: absolute;
  right: 9px;
  bottom: 8px;
  font-family: "Open Sans", sans-serif;
  font-size: 15px;
  line-height: 22px;
  letter-spacing: 0.06px;
  color: #dcdcdc;
}
```
